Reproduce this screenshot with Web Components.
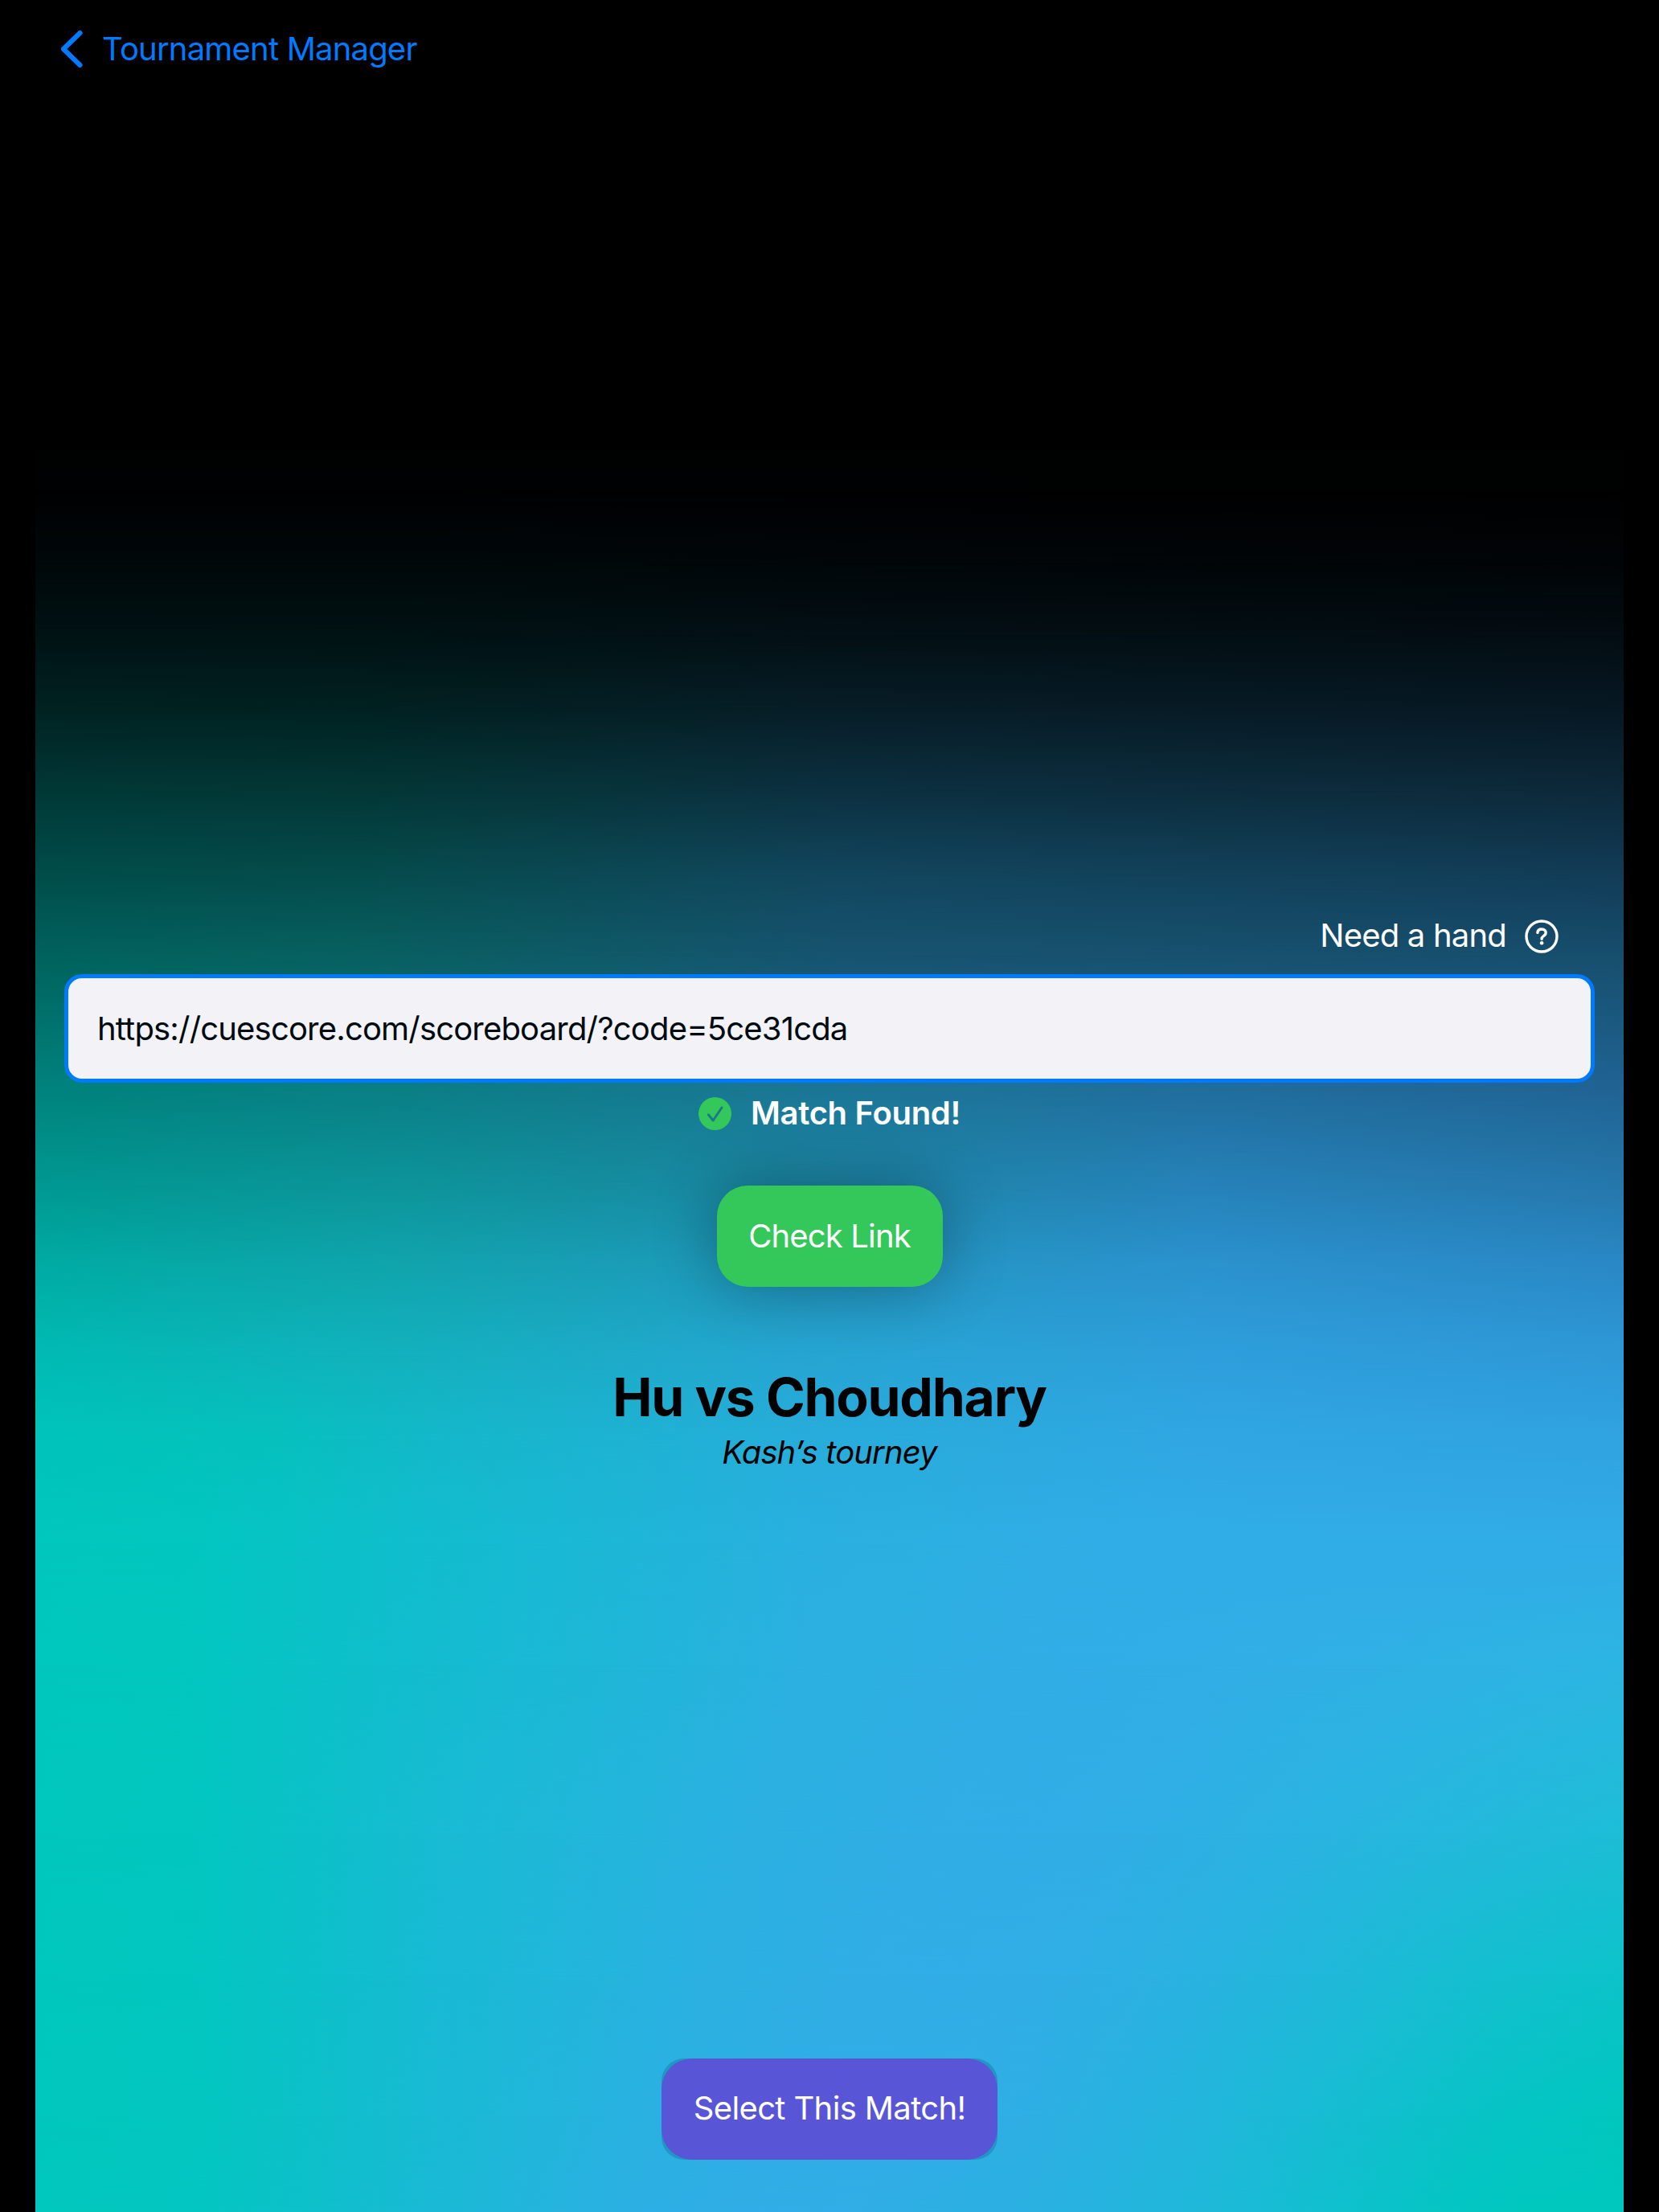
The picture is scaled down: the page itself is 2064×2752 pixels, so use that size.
<!DOCTYPE html>
<html lang="en">
<head>
<meta charset="utf-8">
<title>Tournament Manager</title>
<style>
  html, body { margin: 0; background: #000; }
  body { font-family: Inter, "Liberation Sans", sans-serif; font-size: 40px; line-height: 48px; color: #fff; }
</style>
</head>
<body>
<match-screen></match-screen>
<script>
const define = (name, html, setup) => customElements.define(name, class extends HTMLElement {
  constructor() {
    super();
    const t = document.createElement('template');
    t.innerHTML = html;
    this.attachShadow({ mode: 'open' }).append(t.content.cloneNode(true));
    if (setup) setup(this.shadowRoot, this);
  }
});

// Colour mesh: [y, [x, r, g, b], ...], in pixels from the panel's top left corner.
const MESH = [
  [510, [0,0,0,0], [1976,0,0,0]],
  [610, [0,0,1,2], [1976,0,1,1]],
  [700, [0,0,8,10], [500,0,8,10], [1000,1,6,9], [1976,1,4,7]],
  [790, [0,0,18,20], [400,0,18,19], [1000,3,16,21], [1976,3,13,18]],
  [880, [0,0,34,33], [400,1,33,33], [1000,7,29,39], [1976,7,24,35]],
  [983, [0,0,56,54], [400,3,55,54], [1000,12,48,64], [1976,13,41,58]],
  [1088, [0,0,77,74], [400,5,76,76], [1000,18,70,94], [1976,18,60,87]],
  [1193, [0,0,99,94], [400,8,97,97], [1000,23,84,113], [1976,23,79,110]],
  [1351, [0,0,130,124], [460,10,126,133], [950,27,118,148], [1450,32,109,157], [1976,32,99,147]],
  [1474, [0,0,152,145], [460,13,148,154], [950,28,135,165], [1450,38,130,185], [1976,37,119,171]],
  [1579, [0,0,172,164], [460,17,165,174], [950,34,152,192], [1450,43,147,207], [1976,42,137,199]],
  [1685, [0,0,187,179], [460,19,177,190], [950,38,165,210], [1450,46,159,219], [1976,46,152,214]],
  [1790, [0,0,196,187], [300,6,193,190], [500,20,184,202], [950,39,173,219], [1450,48,167,226], [1976,48,163,225]],
  [1920, [0,0,199,190], [200,2,198,192], [500,18,189,207], [950,41,176,223], [1350,49,173,230], [1976,49,172,230]],
  [2071, [0,0,199,190], [180,1,199,191], [500,20,188,208], [950,43,176,224], [1300,50,173,230], [1650,48,176,229], [1976,44,181,226]],
  [2281, [0,0,199,190], [200,2,198,192], [500,24,187,211], [900,44,176,226], [1220,50,173,230], [1450,46,176,228], [1700,38,183,222], [1976,29,189,214]],
  [2457, [0,0,199,190], [200,2,198,192], [500,24,186,212], [850,44,176,226], [1120,50,173,230], [1350,46,176,228], [1600,33,184,218], [1800,20,191,207], [1976,12,195,202]],
  [2632, [0,0,199,190], [210,3,198,192], [500,25,186,212], [780,43,176,226], [1020,50,173,230], [1250,46,175,228], [1450,34,182,220], [1650,19,190,207], [1820,6,196,197], [1976,0,199,190]],
  [2752, [0,0,199,190], [220,5,197,194], [500,26,185,213], [750,44,175,227], [940,50,173,230], [1230,43,176,226], [1450,31,184,217], [1620,15,192,205], [1780,3,198,194], [1860,0,199,190], [1976,0,199,190]]
];

// Each row is a horizontal gradient that fades in between the previous row and its own.
define('mesh-backdrop', `
  <style>
    :host { display: grid; overflow: hidden; }
    i { grid-area: 1 / 1; display: block; }
  </style>`, root => {
  MESH.forEach(([y, ...stops], n) => {
    const row = document.createElement('i');
    row.style.background = `linear-gradient(90deg, ${stops.map(([x, r, g, b]) => `rgb(${r},${g},${b}) ${x}px`).join(',')})`;
    if (n) row.style.maskImage = `linear-gradient(180deg, transparent ${MESH[n - 1][0]}px, #000 ${y}px)`;
    root.append(row);
  });
});

define('back-link', `
  <style>
    :host { display: flex; align-items: center; gap: 24px; color: #007aff; letter-spacing: -.8px; }
    svg { display: block; }
    span { padding-top: 1px; }
  </style>
  <svg width="28" height="48" viewBox="0 0 28 48" fill="none" stroke="currentColor" stroke-width="6" stroke-linecap="round" stroke-linejoin="round"><path d="M24.5 4 L4 24 L24.5 44"/></svg>
  <span><slot></slot></span>`);

define('help-link', `
  <style>
    :host { display: flex; align-items: center; justify-content: flex-end; gap: 23px; letter-spacing: -.8px; }
    svg { display: block; }
    span { padding-bottom: 1px; }
  </style>
  <span><slot></slot></span>
  <svg width="42" height="42" viewBox="0 0 42 42" fill="none" stroke="#fff" stroke-linecap="round" stroke-linejoin="round">
    <circle cx="21" cy="21" r="19" stroke-width="3.4"/>
    <path d="M15.9 16.4 C16.1 13.4 18.3 12 21.1 12 C24.3 12 26.2 13.8 26.2 16.3 C26.2 18.5 25.1 19.5 23.3 20.7 C21.7 21.8 21.1 22.5 21.1 24.3" stroke-width="3.4"/>
    <circle cx="21.1" cy="29.2" r="2.3" fill="#fff" stroke="none"/>
  </svg>`);

define('link-field', `
  <style>
    :host { display: flex; align-items: center; box-sizing: border-box; height: 135px; padding: 0 36px; border: 5px solid #007aff; border-radius: 22px; background: #f2f2f7; color: #000a10; letter-spacing: -.82px; }
  </style>
  <span><slot></slot></span>`);

define('match-status', `
  <style>
    :host { display: flex; align-items: center; justify-content: center; gap: 24px; font-weight: 600; letter-spacing: -.32px; }
    svg { display: block; }
  </style>
  <svg width="41" height="41" viewBox="0 0 41 41">
    <circle cx="20.5" cy="20.5" r="20.5" fill="#34c759"/>
    <path d="M12.3 21.8 L18.2 29 L29 13" fill="none" stroke="#1c7891" stroke-width="3" stroke-linecap="round" stroke-linejoin="round"/>
  </svg>
  <span><slot></slot></span>`);

define('pill-button', `
  <style>
    :host { display: flex; align-items: center; justify-content: center; box-sizing: border-box; height: 126px; border-radius: 38px; background: #34c759; }
    :host([tone="go"]) { width: 281px; box-shadow: 0 0 80px rgba(0,0,0,.33); letter-spacing: -.85px; }
    :host([tone="select"]) { width: 418px; border-radius: 28px; background: rgba(0,60,90,.22); letter-spacing: -.63px; }
    span { display: flex; flex: 1; align-self: stretch; align-items: center; justify-content: center; border-radius: 38px; white-space: nowrap; }
    :host([tone="select"]) span { box-sizing: border-box; padding-bottom: 2px; background: #5856d6; }
  </style>
  <span><slot></slot></span>`);

define('match-card', `
  <style>
    :host { display: flex; flex-direction: column; align-items: center; color: #000; }
    h1 { margin: 0; font-size: 66px; line-height: 80px; font-weight: 700; letter-spacing: -1.25px; }
    p { margin: 5px 0 0; font-style: italic; letter-spacing: -.87px; }
  </style>
  <h1><slot name="title"></slot></h1>
  <p><slot></slot></p>`);

define('match-screen', `
  <style>
    :host { display: grid; grid-template: 2752px / 2064px; }
    mesh-backdrop { grid-area: 1 / 1; margin: 0 44px; }
    main { grid-area: 1 / 1; display: flex; flex-direction: column; align-items: center; box-sizing: border-box; padding: 36px 80px 65px; z-index: 1; }
    back-link { align-self: flex-start; margin-left: -5px; }
    help-link { align-self: stretch; margin: 1055px 45px 0 0; }
    link-field { align-self: stretch; margin-top: 23px; }
    match-status { margin-top: 14px; }
    pill-button[tone="go"] { margin-top: 66px; }
    match-card { margin-top: 97px; }
    pill-button[tone="select"] { margin-top: auto; }
  </style>
  <mesh-backdrop></mesh-backdrop>
  <main>
    <back-link>Tournament Manager</back-link>
    <help-link>Need a hand</help-link>
    <link-field>https://cuescore.com/scoreboard/?code=5ce31cda</link-field>
    <match-status>Match Found!</match-status>
    <pill-button tone="go">Check Link</pill-button>
    <match-card><span slot="title">Hu vs Choudhary</span>Kash’s tourney</match-card>
    <pill-button tone="select">Select This Match!</pill-button>
  </main>`);
</script>
</body>
</html>
